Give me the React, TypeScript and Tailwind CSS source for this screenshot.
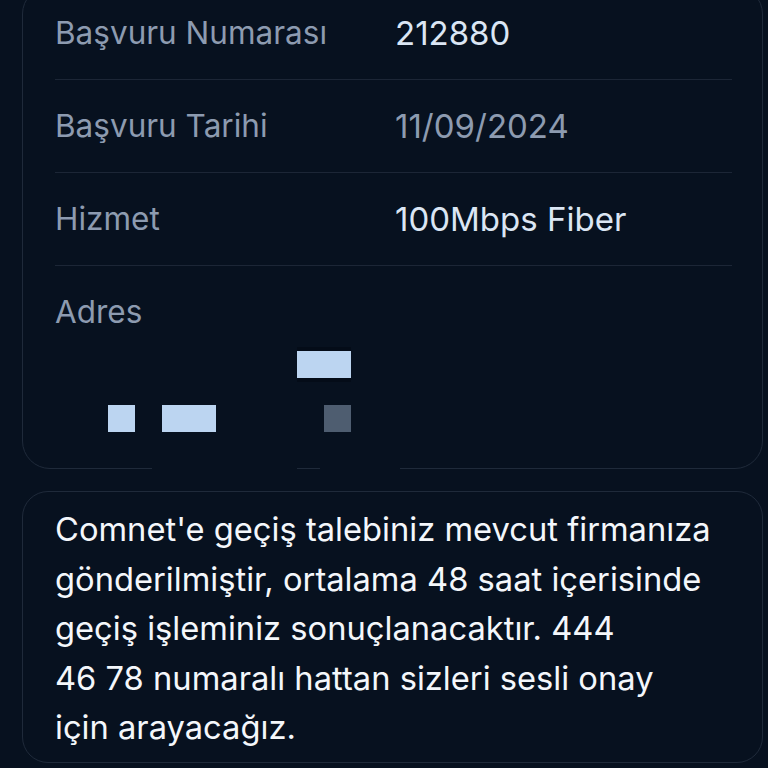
const rows = [
  { label: 'Başvuru Numarası', value: '212880', tone: 'text-[#dbe6f4]' },
  { label: 'Başvuru Tarihi', value: '11/09/2024', tone: 'text-[#8d9bb0]' },
  { label: 'Hizmet', value: '100Mbps Fiber', tone: 'text-[#dbe6f4]' },
];

function DetailRow({ label, value, tone }: { label: string; value: string; tone: string }) {
  return (
    <div className="flex items-center border-b border-[#1c2636] py-[28px] leading-[36px]">
      <span className="w-[340px] shrink-0 text-[31.5px] text-[#8d9bb0]">{label}</span>
      <span className={`text-[33px] ${tone}`}>{value}</span>
    </div>
  );
}

export default function App() {
  return (
    <div
      className="h-[768px] w-[768px] overflow-hidden bg-[#07111f]"
      style={{ fontFamily: 'Inter, "Noto Sans", sans-serif' }}
    >
      {/* application summary */}
      <div className="relative -mt-[14px] ml-[22px] mr-[5px] rounded-[28px] border border-[#1f2a3a] pl-[32px] pr-[30px]">
        {rows.map((r) => (
          <DetailRow key={r.label} {...r} />
        ))}
        <div className="pb-[36px] pt-[28px]">
          <div className="text-[31.5px] leading-[36px] text-[#8d9bb0]">Adres</div>
          {/* address is masked */}
          <div className="flex flex-col gap-[23px] pt-[17px]">
            <div className="ml-[242px] w-[54px] bg-[#040c18] py-[4px]">
              <div className="h-[27px] bg-[#bcd5f1]" />
            </div>
            <div className="flex">
              <div className="ml-[53px] h-[27px] w-[27px] bg-[#bcd5f1]" />
              <div className="ml-[27px] h-[27px] w-[54px] bg-[#bcd5f1]" />
              <div className="ml-[108px] h-[27px] w-[27px] bg-[#4e5d70]" />
            </div>
          </div>
        </div>
        <span className="absolute -bottom-px left-[129px] h-[3px] w-[145px] bg-[#07111f]" />
        <span className="absolute -bottom-px left-[297px] h-[3px] w-[80px] bg-[#07111f]" />
      </div>

      <div className="ml-[22px] mr-[5px] mt-[22px] rounded-[26px] border border-[#1f2a3a] pb-[9px] pl-[32px] pr-[20px] pt-[13px]">
        <p className="text-[32.7px] leading-[49.5px] text-[#f4f7fb]">
          Comnet'e geçiş talebiniz mevcut firmanıza
          <br />
          gönderilmiştir, ortalama 48 saat içerisinde
          <br />
          geçiş işleminiz sonuçlanacaktır. 444
          <br />
          46 78 numaralı hattan sizleri sesli onay
          <br />
          için arayacağız.
        </p>
      </div>
    </div>
  );
}
